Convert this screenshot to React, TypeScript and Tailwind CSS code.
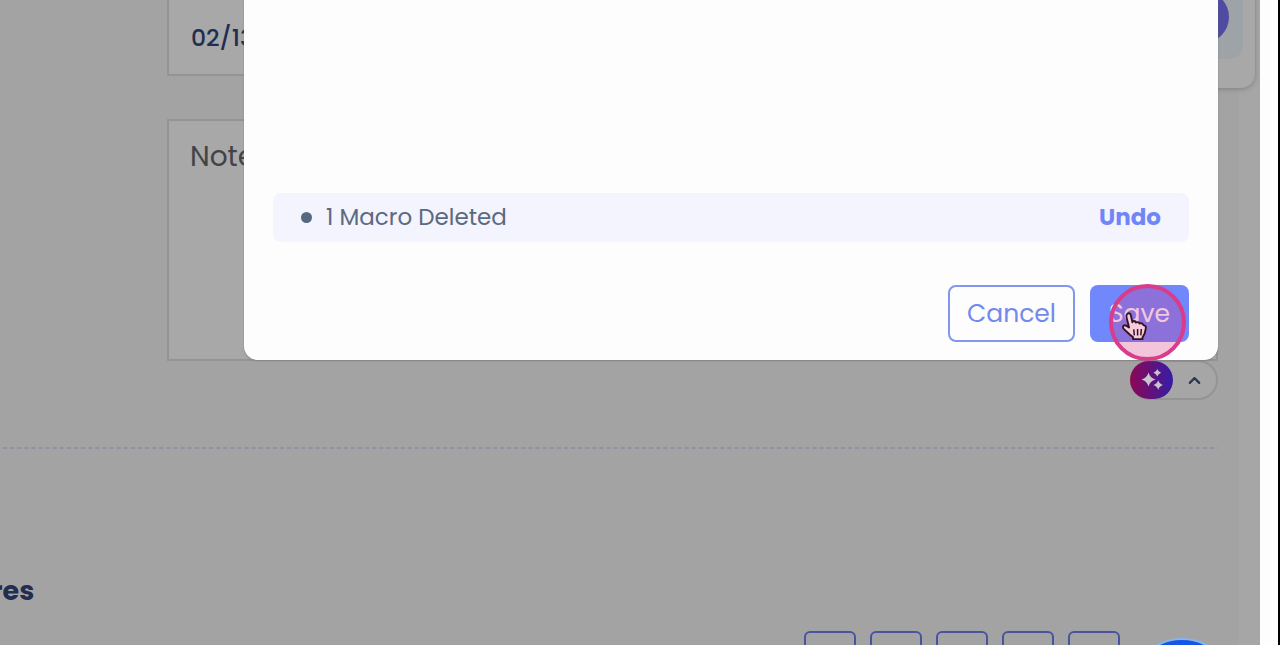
import { ChevronUp } from "lucide-react"

function Sparkles() {
  return (
    <svg className="size-6" viewBox="0 0 24 24" fill="#c8c3cf">
      <path d="M8.5 4.5Q10 10 15.5 11.5Q10 13 8.5 18.5Q7 13 1.5 11.5Q7 10 8.5 4.5Z" />
      <path d="M17.3 1Q18.2 3.9 21.1 4.8Q18.2 5.7 17.3 8.6Q16.4 5.7 13.5 4.8Q16.4 3.9 17.3 1Z" />
      <path d="M18.2 12.3Q19.4 16 23 17.1Q19.4 18.2 18.2 21.9Q17 18.2 13.4 17.1Q17 16 18.2 12.3Z" />
    </svg>
  )
}

function Pointer() {
  return (
    <svg className="absolute left-[1121px] top-[311px]" width="27" height="31" viewBox="0 0 28 33">
      <path
        d="M6.3 3.1C7.8 1.7 9.7 2.4 10.1 4.4L11.8 12L12.1 10.8C13.6 10.4 15 11 15.5 12.3C17 11.4 18.8 12 19.5 13.3C21 12.5 22.9 13.3 23.4 15C25.2 15 26.3 16.2 26.1 18.2L24.8 24L22.5 28.3V30H12.5V28L9.2 25.3L3 19.6C1.5 18.2 1.3 16.3 2.5 15.4C4 14.4 5.7 15.7 8.2 17.6L5.5 6.8C5.1 5.2 5.4 4 6.3 3.1Z"
        fill="#f6cbdc"
        stroke="#321325"
        strokeWidth="2"
        strokeLinejoin="round"
      />
      <path d="M13.2 19.5L13.8 26M17.3 19.2V26M21.3 19.2L20.7 26" stroke="#321325" strokeWidth="1.6" />
    </svg>
  )
}

export default function App() {
  const boxes = [1, 2, 3, 4, 5]

  return (
    <div className="relative flex h-[645px] w-[1280px] overflow-hidden bg-[#a3a3a3] font-['Poppins','Inter',sans-serif]">
      {/* Form behind the dialog */}
      <div className="flex w-[1239px] shrink-0 flex-col">
        <div className="ml-[167px] flex h-[76px] w-[1051px] shrink-0 items-start border-2 border-t-0 border-[#939497] bg-[#a8a8a8] px-[22px] pt-[22px]">
          <span className="text-[23.5px] leading-[32px] font-medium text-[#222d52]">02/13</span>
        </div>
        <div className="mt-[43px] ml-[167px] h-[242px] w-[1051px] shrink-0 border-2 border-[#939497] bg-[#a8a8a8] px-[21px] pt-[18px]">
          <span className="text-[28px] leading-[36px] text-[#434347]">Note</span>
        </div>
        <div className="mr-[21px] -mt-px flex h-10 w-[88px] shrink-0 items-center self-end rounded-full border-2 border-[#949494] bg-[#a6a6a6]">
          <div className="-ml-0.5 flex h-[38px] w-[43px] shrink-0 items-center justify-center rounded-full bg-linear-to-r/srgb from-[#8d0754] to-[#351da5]">
            <Sparkles />
          </div>
          <ChevronUp className="ml-3 size-[19px] shrink-0 text-[#293751]" strokeWidth={2.7} />
        </div>
        <svg className="mt-[47px] block h-[2px] w-[1218px] shrink-0">
          <line x1="-4" y1="1" x2="1218" y2="1" stroke="#9092a0" strokeWidth="2" strokeDasharray="4 3.1" />
        </svg>
        <h2 className="mt-[124px] -ml-[9px] text-[27px] leading-[36px] font-bold text-[#222d52]">res</h2>
        <div className="mt-[22px] ml-[804px] flex gap-[14px]">
          {boxes.map((box) => (
            <div key={box} className="h-12 w-[52px] shrink-0 rounded-md border-2 border-[#4a539f]" />
          ))}
        </div>
      </div>
      <div className="w-[21px] shrink-0 bg-[#a6a6a6]" />
      <div className="w-[18px] shrink-0 bg-[#fdfdfd]" />
      <div className="w-[2px] shrink-0 bg-black" />

      {/* Floating widget */}
      <div className="absolute -top-3 left-[1180px] h-[100px] w-[75px] rounded-br-[14px] bg-[#a8a8a8] shadow-[0_1px_5px_#66666699]">
        <div className="h-[71px] w-[63px] rounded-br-[14px] bg-[#9ea3a7]" />
        <div className="absolute top-[3px] left-[-3px] size-[52px] rounded-full bg-[#504ba0]" />
      </div>
      <div className="absolute top-[638px] left-[1131px] size-[102px] rounded-full border-2 border-[#85b5ef] bg-[#1456e8]" />

      {/* Macro dialog */}
      <div className="absolute top-0 left-[244px] flex h-[360px] w-[974px] flex-col rounded-b-[14px] bg-[#fdfdfd] px-[29px] pt-[193px] shadow-[0_1px_2px_#77777788]">
        <div className="flex h-[49px] items-center rounded-lg bg-[#f3f4fe] px-7">
          <span className="size-[11px] rounded-full bg-[#566780]" />
          <span className="ml-[14px] text-[23px] text-[#5c6a80]">1 Macro Deleted</span>
          <button className="ml-auto text-[23px] font-bold text-[#7085f8]">Undo</button>
        </div>
        <div className="mt-[43px] flex justify-end gap-[15px]">
          <button className="h-[57px] w-[127px] rounded-lg border-2 border-[#8296ed] text-[25px] text-[#7389ee]">Cancel</button>
          <button className="h-[57px] w-[99px] rounded-lg bg-[#7088fb] text-[25px] text-white">Save</button>
        </div>
      </div>

      {/* Click highlight */}
      <div className="absolute top-[284px] left-[1109px] size-[77px] rounded-full border-4 border-[#d83c8a] bg-[#da3584]/28" />
      <Pointer />
    </div>
  )
}
